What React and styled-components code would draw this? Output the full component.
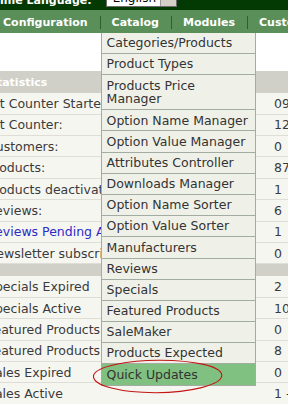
import React from 'react';
import styled, { createGlobalStyle } from 'styled-components';

const GlobalStyle = createGlobalStyle`
  html, body { margin: 0; padding: 0; background: #ffffff; overflow: hidden; }
  body { font-family: "DejaVu Sans", Verdana, sans-serif; }
`;

const Page = styled.div`
  position: relative;
  width: 640px;
  margin-left: -20px;
`;

const TopBar = styled.div`
  box-sizing: border-box;
  height: 10px;
  overflow: hidden;
  background: #033a03;
  display: flex;
  align-items: flex-end;
  padding: 0 0 3px 20px;
`;

const TopLabel = styled.span`
  color: #ffffff;
  font-weight: bold;
  font-size: 11px;
  line-height: 13px;
  white-space: nowrap;
`;

const SelectBox = styled.div`
  box-sizing: border-box;
  margin-left: 14px;
  width: 71px;
  height: 18px;
  display: flex;
  align-items: center;
  background: #ffffff;
  border: 1px solid #6b6b6b;
  font-size: 12px;
  color: #000;
`;

const SelectText = styled.span`
  flex: 1;
  padding-left: 6px;
`;

const SelectButton = styled.span`
  width: 15px;
  align-self: stretch;
  background: #d4d0c8;
  border-left: 1px solid #9a9a9a;
`;

const NavBar = styled.div`
  height: 23px;
  background: #5a8f5a;
  display: flex;
  align-items: stretch;
  padding-left: 11px;
`;

const NavItem = styled.div`
  position: relative;
  display: flex;
  align-items: center;
  padding: 1px 12px 0;
  color: #ffffff;
  font-weight: bold;
  font-size: 11px;
  white-space: nowrap;

  & + &::before {
    content: '';
    position: absolute;
    left: 0;
    top: 6px;
    width: 1px;
    height: 13px;
    background: #2d5e2d;
  }
`;

const Dropdown = styled.ul`
  position: absolute;
  top: 100%;
  left: 1px;
  z-index: 2;
  width: 155px;
  box-sizing: border-box;
  margin: 0;
  padding: 0;
  list-style: none;
  border-left: 1px solid #a3aca3;
  border-right: 1px solid #a3aca3;
  font-weight: normal;
`;

const MenuItem = styled.li`
  padding: 3.2px 5px;
  line-height: 13.8px;
  font-size: 12.5px;
  color: #333333;
  white-space: normal;
  background: ${p => (p.$active ? '#80c080' : '#eff1e9')};
  border-bottom: 1px solid #a3aca3;
`;

const Stats = styled.div`
  margin-top: 38px;
`;

const HeaderRow = styled.div`
  height: 22.3px;
  display: flex;
  align-items: center;
  padding-left: 9px;
  background: #d0d0c8;
  color: #ffffff;
  font-weight: bold;
  font-size: 11px;
`;

const Spacer = styled.div`
  height: 12px;
  background: #d0d0c8;
`;

const Row = styled.div`
  box-sizing: border-box;
  height: 21.4px;
  display: grid;
  grid-template-columns: 294px auto;
  align-items: center;
  background: #f6f6f1;
  border-bottom: 1px solid #deded6;
  font-size: 12.5px;
  color: #3a3a3a;
  white-space: nowrap;
`;

const Label = styled.span`
  padding-left: 7px;
  color: ${p => (p.$link ? '#2b2bc8' : 'inherit')};
`;

const Value = styled.span``;

const Annotation = styled.svg`
  position: absolute;
  left: 110px;
  top: 357px;
  z-index: 3;
  overflow: visible;
`;

const menu = [
  'Categories/Products',
  'Product Types',
  'Products Price Manager',
  'Option Name Manager',
  'Option Value Manager',
  'Attributes Controller',
  'Downloads Manager',
  'Option Name Sorter',
  'Option Value Sorter',
  'Manufacturers',
  'Reviews',
  'Specials',
  'Featured Products',
  'SaleMaker',
  'Products Expected',
  'Quick Updates',
];

const group1 = [
  ['Hit Counter Started:', '09/28/2007'],
  ['Hit Counter:', '1234567'],
  ['Customers:', '0'],
  ['Products:', '876'],
  ['Products deactivated:', '1'],
  ['Reviews:', '6'],
  ['Reviews Pending Approval:', '1', true],
  ['Newsletter subscribers:', '0'],
];

const group2 = [
  ['Specials Expired', '2'],
  ['Specials Active', '10'],
  ['Featured Products Expired', '0'],
  ['Featured Products Active', '8'],
  ['Sales Expired', '0'],
  ['Sales Active', '1 -'],
];

export default function App() {
  return (
    <>
      <GlobalStyle />
      <Page>
        <TopBar>
          <TopLabel>ime Language:</TopLabel>
          <SelectBox>
            <SelectText>English</SelectText>
            <SelectButton />
          </SelectBox>
        </TopBar>
        <NavBar>
          <NavItem>Configuration</NavItem>
          <NavItem>
            Catalog
            <Dropdown>
              {menu.map(m => (
                <MenuItem key={m} $active={m === 'Quick Updates'}>{m}</MenuItem>
              ))}
            </Dropdown>
          </NavItem>
          <NavItem>Modules</NavItem>
          <NavItem>Customers</NavItem>
          <NavItem>Taxes</NavItem>
        </NavBar>
        <Stats>
          <HeaderRow>Statistics</HeaderRow>
          {group1.map(([l, v, link]) => (
            <Row key={l}>
              <Label $link={link}>{l}</Label>
              <Value>{v}</Value>
            </Row>
          ))}
          <Spacer />
          {group2.map(([l, v]) => (
            <Row key={l}>
              <Label>{l}</Label>
              <Value>{v}</Value>
            </Row>
          ))}
        </Stats>
        <Annotation width="136" height="40" viewBox="0 0 136 40">
          <path
            d="M3.5 18.5 C 6 9, 40 3, 70 3.2 C 104 3.4, 132 9, 131.8 18.6 C 131.5 28, 100 35.5, 66 35.7 C 32 35.8, 2 29, 3.5 18.5 Z"
            fill="none"
            stroke="#c41414"
            strokeWidth="1.1"
          />
        </Annotation>
      </Page>
    </>
  );
}
